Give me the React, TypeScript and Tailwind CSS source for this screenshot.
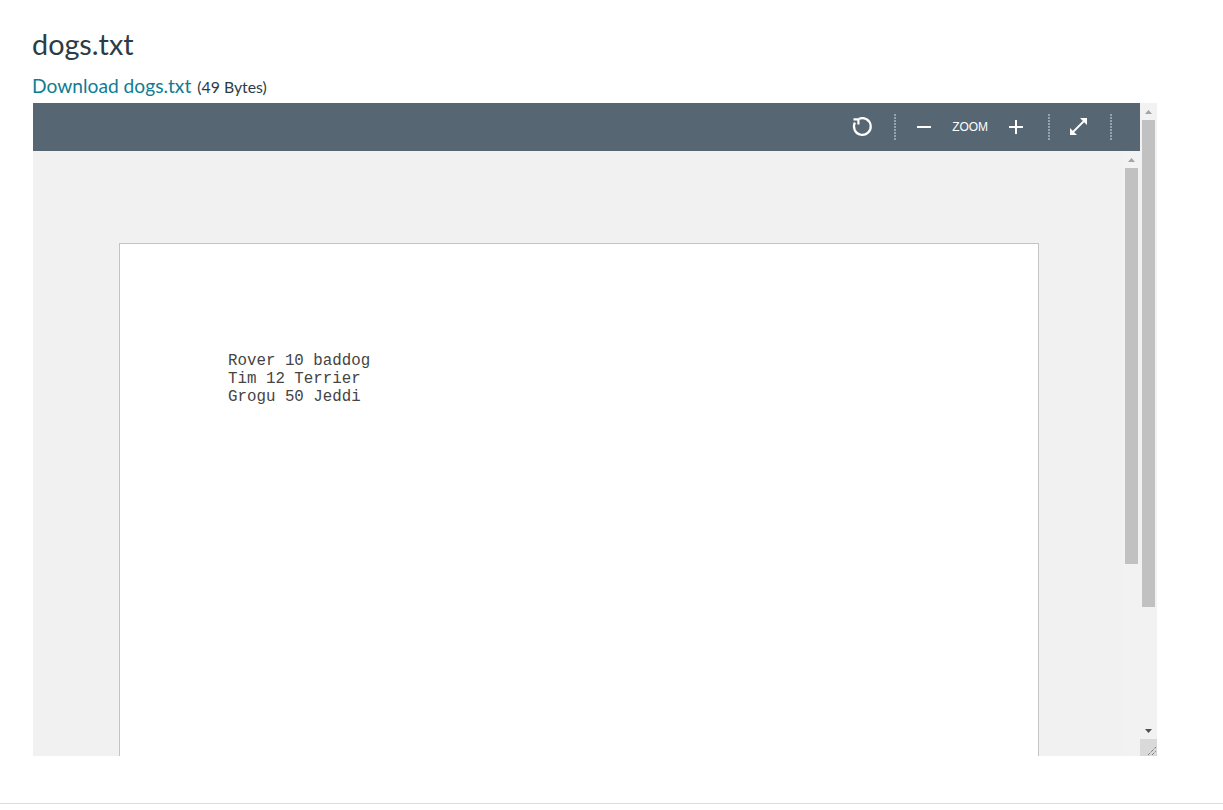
const Triangle = ({ down = false }: { down?: boolean }) => (
  <svg width="7" height="4" viewBox="0 0 7 4" className={down ? "fill-[#505050]" : "fill-[#a3a3a3]"}>
    <path d={down ? "M0 0H7L3.5 4Z" : "M3.5 0L7 4H0Z"} />
  </svg>
);

function Scrollbar({ thumb }: { thumb: string }) {
  return (
    <div className="w-[17px] shrink-0 bg-[#f2f2f2] flex flex-col items-center">
      <div className="h-[17px] w-full flex items-center justify-center">
        <Triangle />
      </div>
      <div className={`w-[13px] bg-[#c1c1c1] ${thumb}`} />
    </div>
  );
}

const Divider = () => (
  <div className="h-[26px] w-[2px] bg-[repeating-linear-gradient(to_bottom,#98a3ac_0,#98a3ac_2px,transparent_2px,transparent_3px)]" />
);

export default function App() {
  return (
    <div className="h-[810px] w-[1223px] overflow-hidden bg-white font-['Lato',sans-serif] flex flex-col">
      <div className="flex-1 pl-[33px]">
        <h1 className="pt-[26px] -ml-px text-[28.8px] leading-[36px] font-normal text-[#2d3b45]">
          dogs.txt
        </h1>
        <p className="mt-[11px] -ml-px h-[26px] leading-[26px] text-[#2d3b45] text-[15.8px]">
          <a className="text-[19.2px] text-[#0e7c93]">Download dogs.txt</a>{" "}
          <span className="ml-[2px]">(49 Bytes)</span>
        </p>

        <div className="relative mt-[4px] w-[1124px] h-[653px] flex">
          <div className="w-[1107px] flex flex-col">
            {/* TOOLBAR */}
            <div className="h-[48px] shrink-0 bg-[#566673] flex items-center justify-end text-white">
              <svg width="24" height="24" viewBox="0 0 24 24" fill="none" stroke="currentColor" strokeWidth="2.2" className="mr-[20px]">
                <path d="M9 3.8A8.4 8.4 0 1 1 4.9 7.6" />
                <path d="M3.5 4.3H8.4V9.4" />
              </svg>
              <Divider />
              <svg width="16" height="16" viewBox="0 0 16 16" stroke="currentColor" strokeWidth="2" className="ml-[20px]">
                <path d="M1 8H15" />
              </svg>
              <span className="w-[76px] text-center font-['Liberation_Sans',sans-serif] text-[12px] tracking-[-0.1px]">
                ZOOM
              </span>
              <svg width="16" height="16" viewBox="0 0 16 16" stroke="currentColor" strokeWidth="2">
                <path d="M1 8H15M8 1V15" />
              </svg>
              <div className="ml-[24px]">
                <Divider />
              </div>
              <svg width="20" height="20" viewBox="0 0 20 20" fill="currentColor" stroke="currentColor" strokeWidth="1.8" className="ml-[19px]">
                <path d="M4 15L15 4" />
                <path stroke="none" d="M11 1H18V8ZM1 11V18H8Z" />
              </svg>
              <div className="ml-[21px] mr-[28px]">
                <Divider />
              </div>
            </div>

            {/* VIEWER */}
            <div className="flex-1 min-h-0 flex">
              <div className="flex-1 bg-[#f1f1f1] pt-[92px] pl-[86px] overflow-hidden">
                <div className="w-[920px] h-[700px] bg-white border border-[#c4c4c4] pt-[108px] pl-[108px]">
                  <pre className="font-['Liberation_Mono',monospace] text-[15.8px] leading-[18px] text-[#444]">
                    {"Rover 10 baddog\nTim 12 Terrier\nGrogu 50 Jeddi"}
                  </pre>
                </div>
              </div>
              <Scrollbar thumb="h-[396px]" />
            </div>
          </div>

          <Scrollbar thumb="h-[487px]" />

          {/* corner */}
          <div className="absolute right-[5px] bottom-[23px] leading-none flex">
            <Triangle down />
          </div>
          <div className="absolute right-0 bottom-0 w-[17px] h-[17px] bg-[#d9d9d9]">
            <svg width="17" height="17" viewBox="0 0 17 17" stroke="#555" strokeWidth="1" strokeDasharray="1 1">
              <path d="M8 16L16 8M12 16L16 12" />
            </svg>
          </div>
        </div>
      </div>
      <div className="h-px bg-[#dcdcdc] mb-[6px]" />
    </div>
  );
}
